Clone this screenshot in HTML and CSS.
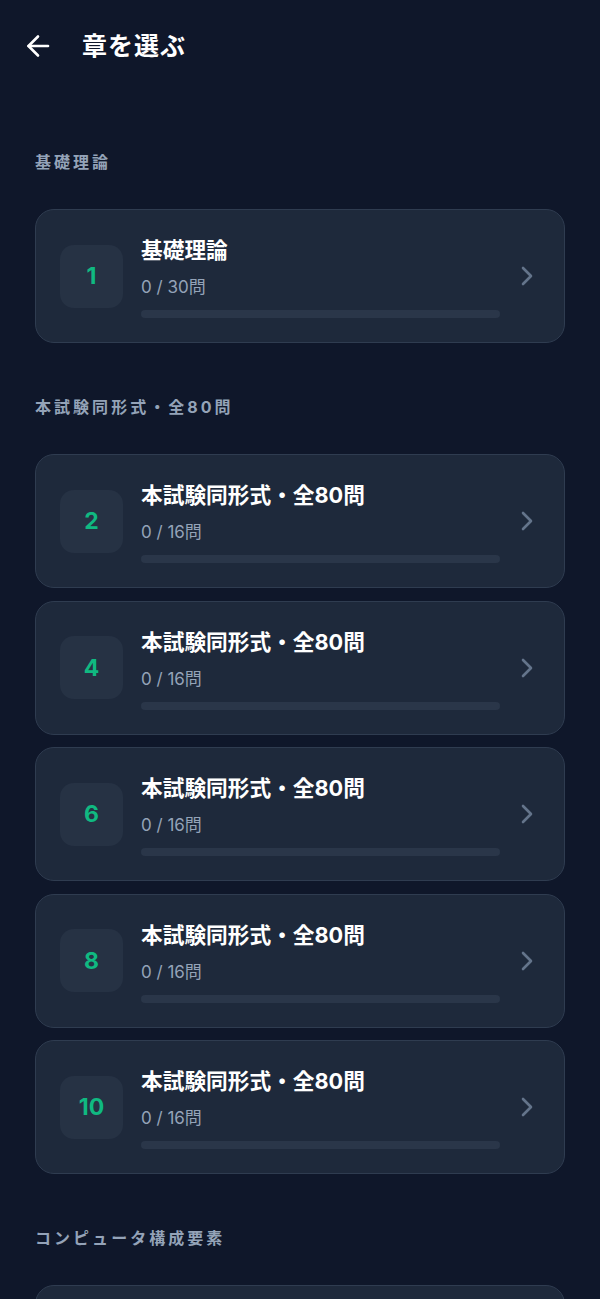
FILE: index.html
```html
<!DOCTYPE html>
<html lang="ja">
<head>
<meta charset="utf-8">
<title>章を選ぶ</title>
<link rel="stylesheet" href="styles.css">
</head>
<body>
<header class="header">
  <button class="back" aria-label="戻る">
    <svg width="26" height="26" viewBox="0 0 26 26" fill="none" stroke="#ffffff" stroke-width="2.6" stroke-linecap="round" stroke-linejoin="round"><path d="M23 13H3.5"/><path d="M13 3.5L3.5 13L13 22.5"/></svg>
  </button>
  <h1 class="title">章を選ぶ</h1>
</header>
<main class="main">
  <section class="section">
    <h2 class="section-label">基礎理論</h2>
    <div class="cards">
      <div class="card">
        <div class="num">1</div>
        <div class="info">
          <div class="card-title">基礎理論</div>
          <div class="card-sub">0 / 30問</div>
          <div class="bar"></div>
        </div>
        <svg class="chev" width="14" height="22" viewBox="0 0 14 22" fill="none" stroke="#64748b" stroke-width="2.6" stroke-linecap="round" stroke-linejoin="round"><path d="M3 3l8 8-8 8"/></svg>
      </div>
    </div>
  </section>
  <section class="section">
    <h2 class="section-label">本試験同形式・全80問</h2>
    <div class="cards">
      <div class="card">
        <div class="num">2</div>
        <div class="info">
          <div class="card-title">本試験同形式・全80問</div>
          <div class="card-sub">0 / 16問</div>
          <div class="bar"></div>
        </div>
        <svg class="chev" width="14" height="22" viewBox="0 0 14 22" fill="none" stroke="#64748b" stroke-width="2.6" stroke-linecap="round" stroke-linejoin="round"><path d="M3 3l8 8-8 8"/></svg>
      </div>
      <div class="card">
        <div class="num">4</div>
        <div class="info">
          <div class="card-title">本試験同形式・全80問</div>
          <div class="card-sub">0 / 16問</div>
          <div class="bar"></div>
        </div>
        <svg class="chev" width="14" height="22" viewBox="0 0 14 22" fill="none" stroke="#64748b" stroke-width="2.6" stroke-linecap="round" stroke-linejoin="round"><path d="M3 3l8 8-8 8"/></svg>
      </div>
      <div class="card">
        <div class="num">6</div>
        <div class="info">
          <div class="card-title">本試験同形式・全80問</div>
          <div class="card-sub">0 / 16問</div>
          <div class="bar"></div>
        </div>
        <svg class="chev" width="14" height="22" viewBox="0 0 14 22" fill="none" stroke="#64748b" stroke-width="2.6" stroke-linecap="round" stroke-linejoin="round"><path d="M3 3l8 8-8 8"/></svg>
      </div>
      <div class="card">
        <div class="num">8</div>
        <div class="info">
          <div class="card-title">本試験同形式・全80問</div>
          <div class="card-sub">0 / 16問</div>
          <div class="bar"></div>
        </div>
        <svg class="chev" width="14" height="22" viewBox="0 0 14 22" fill="none" stroke="#64748b" stroke-width="2.6" stroke-linecap="round" stroke-linejoin="round"><path d="M3 3l8 8-8 8"/></svg>
      </div>
      <div class="card">
        <div class="num">10</div>
        <div class="info">
          <div class="card-title">本試験同形式・全80問</div>
          <div class="card-sub">0 / 16問</div>
          <div class="bar"></div>
        </div>
        <svg class="chev" width="14" height="22" viewBox="0 0 14 22" fill="none" stroke="#64748b" stroke-width="2.6" stroke-linecap="round" stroke-linejoin="round"><path d="M3 3l8 8-8 8"/></svg>
      </div>
    </div>
  </section>
  <section class="section">
    <h2 class="section-label">コンピュータ構成要素</h2>
    <div class="cards">
      <div class="card card-peek"></div>
    </div>
  </section>
</main>
</body>
</html>
```
FILE: styles.css
```css
* { box-sizing: border-box; }
html, body {
  margin: 0;
  padding: 0;
  background: #0f172a;
}
body {
  font-family: "Inter", "Noto Sans CJK JP", sans-serif;
  color: #ffffff;
  overflow: hidden;
  height: 1299px;
}
.header {
  height: 92px;
  display: flex;
  align-items: center;
  padding: 0 0 0 25px;
}
.back {
  background: none;
  border: 0;
  padding: 0;
  width: 26px;
  height: 26px;
  display: flex;
  align-items: center;
  justify-content: center;
  cursor: pointer;
}
.title {
  margin: 0 0 0 31px;
  font-size: 25px;
  font-weight: 700;
  letter-spacing: 1px;
  line-height: 32px;
}
.main {
  padding: 58px 35px 0 35px;
  display: flex;
  flex-direction: column;
  gap: 52px;
}
.section-label {
  margin: 0 0 35px 0;
  font-size: 16px;
  line-height: 24px;
  font-weight: 700;
  color: #94a3b8;
  letter-spacing: 0.19em;
}
.cards {
  display: flex;
  flex-direction: column;
  gap: 12.5px;
}
.card {
  display: flex;
  align-items: center;
  height: 134px;
  padding: 0 26px 0 24px;
  background: #1e293b;
  border: 1px solid #2f3c50;
  border-radius: 19px;
}
.num {
  flex: 0 0 63px;
  height: 63px;
  border-radius: 14px;
  background: #263244;
  display: flex;
  align-items: center;
  justify-content: center;
  color: #10b981;
  font-size: 23px;
  font-weight: 700;
}
.info {
  flex: 1;
  margin-left: 18px;
  display: flex;
  flex-direction: column;
  padding-top: 2px;
}
.card-title {
  font-size: 21.7px;
  font-weight: 700;
  line-height: 28px;
  color: #ffffff;
}
.card-sub {
  margin-top: 12px;
  font-size: 17px;
  line-height: 22px;
  color: #94a3b8;
}
.bar {
  margin-top: 12px;
  height: 8px;
  border-radius: 4px;
  background: #2a3649;
}
.chev {
  flex: 0 0 14px;
  margin-left: 20px;
  margin-right: 4px;
}
```
